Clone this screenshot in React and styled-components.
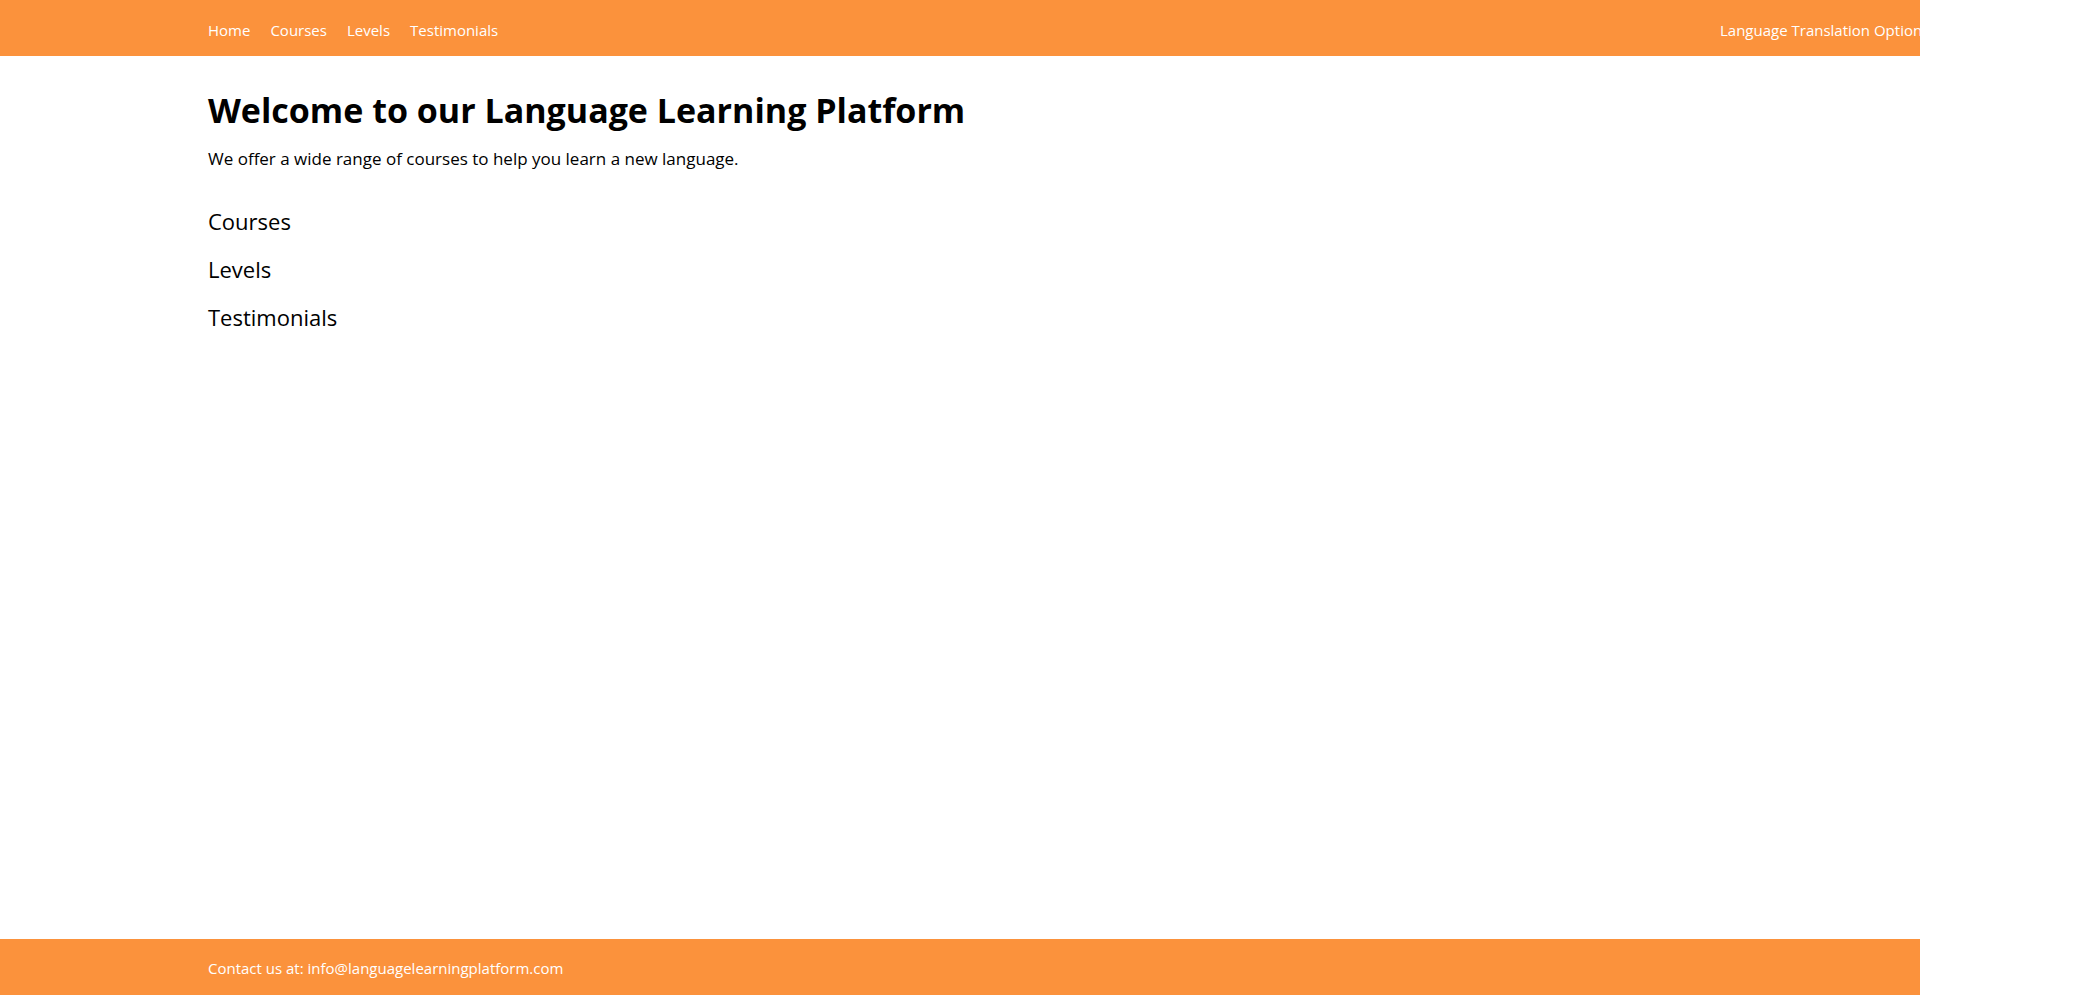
import React from "react";
import styled, { createGlobalStyle } from "styled-components";

const GlobalStyle = createGlobalStyle`
  *, *::before, *::after { box-sizing: border-box; }
  body {
    margin: 0;
    background: #fff;
    color: #000;
    font-family: "Segoe UI", "Open Sans", "Noto Sans", sans-serif;
    font-size: 15px;
    line-height: 24px;
  }
`;

const Page = styled.div`
  display: flex;
  flex-direction: column;
  min-height: 100vh;
  margin-right: 160px;
`;

const columns = `
  display: grid;
  grid-template-columns: minmax(16px, 1fr) minmax(0, 1504px) minmax(16px, 1fr);
  column-gap: 8px;
`;

const Header = styled.header`
  ${columns}
  padding: 18px 0 14px;
  background: #fb923c;
  color: #fff;
  overflow: hidden;
`;

const Footer = styled.footer`
  ${columns}
  padding: 17px 0 15px;
  background: #fb923c;
  color: #fff;
`;

const Nav = styled.nav`
  grid-column: 2;
  display: flex;
  gap: 20px;
`;

const NavLink = styled.a`
  color: inherit;
  text-decoration: none;
`;

const Translation = styled.div`
  grid-column: 3;
  white-space: nowrap;
`;

const Main = styled.main`
  ${columns}
  flex: 1;
  align-content: start;
  padding: 34px 0;
`;

const Content = styled.div`
  grid-column: 2;
`;

const Title = styled.h1`
  margin: 0 0 15px;
  font-size: 34px;
  font-weight: 700;
  line-height: 40px;
`;

const Intro = styled.p`
  margin: 0 0 32px;
  font-size: 17px;
  line-height: 28px;
`;

const SectionTitle = styled.h2`
  margin: 0 0 16px;
  font-size: 22px;
  font-weight: 400;
  line-height: 32px;
`;

const Contact = styled.p`
  grid-column: 2;
  margin: 0;
`;

const sections = ["Courses", "Levels", "Testimonials"];

export default function App() {
  return (
    <>
      <GlobalStyle />
      <Page>
        <Header>
          <Nav>
            <NavLink href="#home">Home</NavLink>
            {sections.map((name) => (
              <NavLink key={name} href={`#${name.toLowerCase()}`}>{name}</NavLink>
            ))}
          </Nav>
          <Translation>Language Translation Options</Translation>
        </Header>
        <Main id="home">
          <Content>
            <Title>Welcome to our Language Learning Platform</Title>
            <Intro>We offer a wide range of courses to help you learn a new language.</Intro>
            {sections.map((name) => (
              <section key={name} id={name.toLowerCase()}>
                <SectionTitle>{name}</SectionTitle>
              </section>
            ))}
          </Content>
        </Main>
        <Footer>
          <Contact>Contact us at: info@languagelearningplatform.com</Contact>
        </Footer>
      </Page>
    </>
  );
}
